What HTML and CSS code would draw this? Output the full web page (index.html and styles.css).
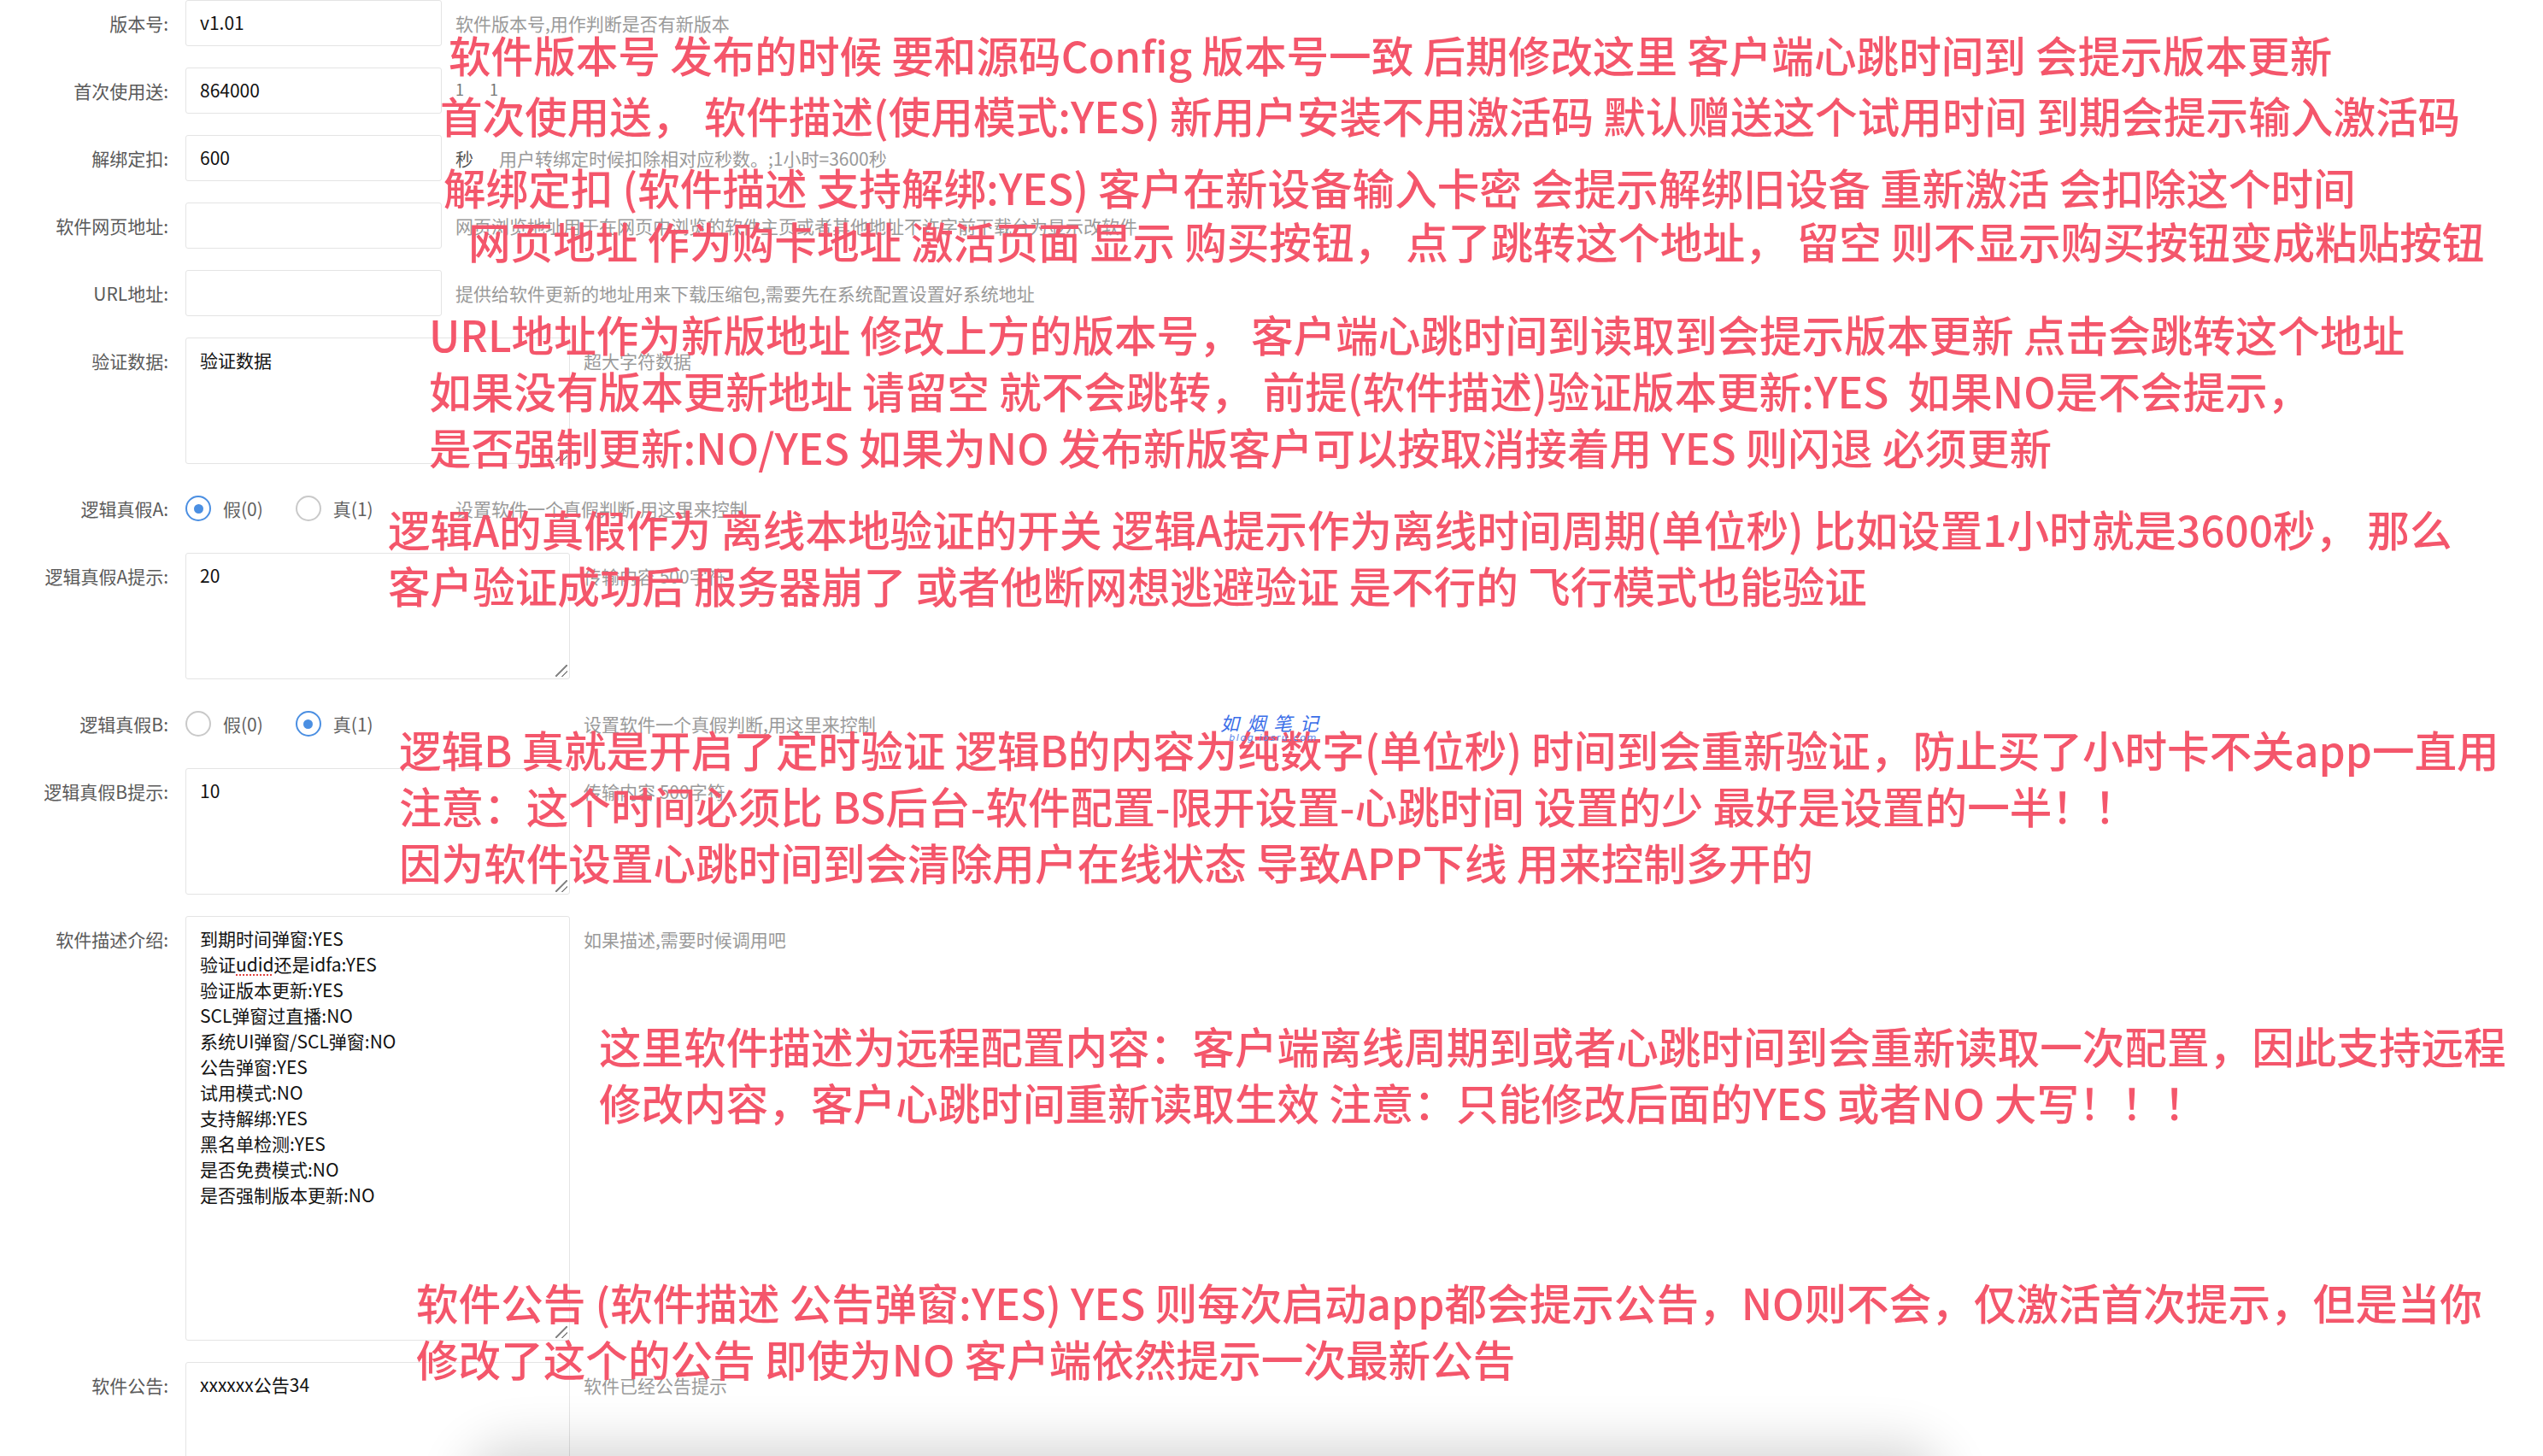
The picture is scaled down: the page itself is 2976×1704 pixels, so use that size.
FILE: index.html
```html
<!DOCTYPE html>
<html lang="zh-CN">
<head>
<meta charset="utf-8">
<title>软件配置</title>
<link rel="stylesheet" href="styles.css">
</head>
<body>
<div class="page">
  <form class="form">
    <div class="row">
      <label class="label">版本号:</label>
      <div class="input">v1.01</div>
      <div class="hint">软件版本号,用作判断是否有新版本</div>
    </div>
    <div class="row">
      <label class="label">首次使用送:</label>
      <div class="input">864000</div>
      <div class="hint hint-small"><span>1</span><span>1</span></div>
    </div>
    <div class="row">
      <label class="label">解绑定扣:</label>
      <div class="input">600</div>
      <div class="hint"><span class="unit">秒</span>用户转绑定时候扣除相对应秒数。;1小时=3600秒</div>
    </div>
    <div class="row">
      <label class="label">软件网页地址:</label>
      <div class="input"></div>
      <div class="hint">网页浏览地址用于在网页中浏览的软件主页或者其他地址不许字前下载台为显示改软件</div>
    </div>
    <div class="row">
      <label class="label">URL地址:</label>
      <div class="input"></div>
      <div class="hint">提供给软件更新的地址用来下载压缩包,需要先在系统配置设置好系统地址</div>
    </div>
    <div class="row">
      <label class="label">验证数据:</label>
      <div class="textarea">验证数据</div>
      <div class="hint">超大字符数据</div>
    </div>
    <div class="row">
      <label class="label">逻辑真假A:</label>
      <div class="radios">
        <span class="radio"><i class="dot on"></i>假(0)</span>
        <span class="radio"><i class="dot"></i>真(1)</span>
      </div>
      <div class="hint">设置软件一个真假判断,用这里来控制</div>
    </div>
    <div class="row">
      <label class="label">逻辑真假A提示:</label>
      <div class="textarea">20</div>
      <div class="hint">传输内容 500字符</div>
    </div>
    <div class="row">
      <label class="label">逻辑真假B:</label>
      <div class="radios radios-wide">
        <span class="radio"><i class="dot"></i>假(0)</span>
        <span class="radio"><i class="dot on"></i>真(1)</span>
      </div>
      <div class="hint">设置软件一个真假判断,用这里来控制</div>
    </div>
    <div class="row">
      <label class="label">逻辑真假B提示:</label>
      <div class="textarea">10</div>
      <div class="hint">传输内容 500字符</div>
    </div>
    <div class="row">
      <label class="label">软件描述介绍:</label>
      <div class="textarea textarea-tall">
        <div>到期时间弹窗:YES</div>
        <div>验证<span class="spell">udid</span>还是idfa:YES</div>
        <div>验证版本更新:YES</div>
        <div>SCL弹窗过直播:NO</div>
        <div>系统UI弹窗/SCL弹窗:NO</div>
        <div>公告弹窗:YES</div>
        <div>试用模式:NO</div>
        <div>支持解绑:YES</div>
        <div>黑名单检测:YES</div>
        <div>是否免费模式:NO</div>
        <div>是否强制版本更新:NO</div>
      </div>
      <div class="hint">如果描述,需要时候调用吧</div>
    </div>
    <div class="row">
      <label class="label">软件公告:</label>
      <div class="textarea">xxxxxx公告34</div>
      <div class="hint">软件已经公告提示</div>
    </div>
  </form>

  <div class="note note-a">
    <div>软件版本号 发布的时候 要和源码Config 版本号一致 后期修改这里 客户端心跳时间到 会提示版本更新</div>
  </div>
  <div class="note note-b">
    <div>首次使用送， 软件描述(使用模式:YES) 新用户安装不用激活码 默认赠送这个试用时间 到期会提示输入激活码</div>
  </div>
  <div class="note note-c">
    <div>解绑定扣 (软件描述 支持解绑:YES) 客户在新设备输入卡密 会提示解绑旧设备 重新激活 会扣除这个时间</div>
  </div>
  <div class="note note-d">
    <div>网页地址 作为购卡地址 激活页面 显示 购买按钮， 点了跳转这个地址， 留空 则不显示购买按钮变成粘贴按钮</div>
  </div>
  <div class="note note-e">
    <div>URL地址作为新版地址 修改上方的版本号， 客户端心跳时间到读取到会提示版本更新 点击会跳转这个地址</div>
    <div>如果没有版本更新地址 请留空 就不会跳转， 前提(软件描述)验证版本更新:YES  如果NO是不会提示，</div>
    <div>是否强制更新:NO/YES 如果为NO 发布新版客户可以按取消接着用 YES 则闪退 必须更新</div>
  </div>
  <div class="note note-f">
    <div>逻辑A的真假作为 离线本地验证的开关 逻辑A提示作为离线时间周期(单位秒) 比如设置1小时就是3600秒， 那么</div>
    <div>客户验证成功后 服务器崩了 或者他断网想逃避验证 是不行的 飞行模式也能验证</div>
  </div>
  <div class="note note-g">
    <div>逻辑B 真就是开启了定时验证 逻辑B的内容为纯数字(单位秒) 时间到会重新验证，防止买了小时卡不关app一直用</div>
    <div>注意：这个时间必须比 BS后台-软件配置-限开设置-心跳时间 设置的少 最好是设置的一半！！</div>
    <div>因为软件设置心跳时间到会清除用户在线状态 导致APP下线 用来控制多开的</div>
  </div>
  <div class="note note-h">
    <div>这里软件描述为远程配置内容：客户端离线周期到或者心跳时间到会重新读取一次配置，因此支持远程</div>
    <div>修改内容，客户心跳时间重新读取生效 注意：只能修改后面的YES 或者NO 大写！！！</div>
  </div>
  <div class="note note-i">
    <div>软件公告 (软件描述 公告弹窗:YES) YES 则每次启动app都会提示公告，NO则不会，仅激活首次提示，但是当你</div>
    <div>修改了这个的公告 即使为NO 客户端依然提示一次最新公告</div>
  </div>

  <div class="watermark">
    <div class="wm-title">如烟笔记</div>
    <div class="wm-url">blog.iosru.com</div>
  </div>

  <div class="shadow"></div>
</div>
</body>
</html>
```

FILE: styles.css
```css
html, body {
  margin: 0;
  padding: 0;
  overflow: hidden;
  background: #ffffff;
}

.page {
  position: relative;
  width: 2976px;
  height: 1704px;
  overflow: hidden;
  font-family: "Noto Sans CJK SC", "Noto Sans", sans-serif;
}

.form {
  display: flex;
  flex-direction: column;
  gap: 25px;
  margin: 0;
}

.row {
  display: flex;
  align-items: flex-start;
}

.label {
  width: 217px;
  box-sizing: border-box;
  padding-right: 20px;
  height: 54px;
  line-height: 54px;
  text-align: right;
  font-size: 21px;
  color: #5a5a5a;
  flex: none;
}

.input {
  width: 300px;
  height: 54px;
  box-sizing: border-box;
  border: 1.5px solid #e4e4e4;
  border-radius: 3px;
  padding-left: 16px;
  line-height: 51px;
  font-size: 21px;
  color: #111111;
  flex: none;
}

.hint {
  margin-left: 16px;
  height: 54px;
  line-height: 54px;
  font-size: 21px;
  color: #9a9a9a;
  white-space: nowrap;
}

.hint-small {
  display: flex;
  gap: 30px;
  font-size: 18px;
  line-height: 50px;
  color: #777;
}

.unit {
  color: #555;
  margin-right: 30px;
}

.textarea {
  position: relative;
  width: 450px;
  height: 148px;
  box-sizing: border-box;
  border: 1.5px solid #e4e4e4;
  border-radius: 3px;
  padding: 10px 16px;
  line-height: 30px;
  font-size: 21px;
  color: #111111;
  flex: none;
}

.textarea::after {
  content: "";
  position: absolute;
  right: 2px;
  bottom: 2px;
  width: 14px;
  height: 14px;
  background: linear-gradient(135deg,
    transparent 0 46%, #8a8a8a 46% 54%, transparent 54% 72%,
    #8a8a8a 72% 80%, transparent 80% 100%);
}

.textarea-tall {
  height: 497px;
}

.spell {
  text-decoration: underline dotted #e0433f;
  text-decoration-thickness: 2px;
  text-underline-offset: 3px;
}

.radios {
  width: 300px;
  height: 54px;
  display: flex;
  align-items: center;
  flex: none;
}

.radios-wide {
  width: 450px;
}

.radio {
  display: flex;
  align-items: center;
  gap: 14px;
  margin-right: 38px;
  font-size: 21px;
  color: #5f5f5f;
}

.dot {
  width: 30px;
  height: 30px;
  box-sizing: border-box;
  border: 2px solid #c9c9c9;
  border-radius: 50%;
  display: flex;
  align-items: center;
  justify-content: center;
}

.dot.on {
  border-color: #4b8fe2;
}

.dot.on::after {
  content: "";
  width: 11px;
  height: 11px;
  border-radius: 50%;
  background: #4b8fe2;
}

.note {
  position: absolute;
  color: #f4566b;
  font-size: 49.6px;
  font-weight: 500;
  line-height: 66px;
  white-space: nowrap;
  font-family: "Noto Sans CJK SC", sans-serif;
}

.note > div {
  white-space: pre;
}

.note-a { left: 525px; top: 30px; }
.note-b { left: 515px; top: 101px; }
.note-c { left: 519px; top: 185px; }
.note-d { left: 548px; top: 248px; }
.note-e { left: 502px; top: 357px; }
.note-f { left: 454px; top: 585px; }
.note-g { left: 467px; top: 843px; }
.note-h { left: 701px; top: 1190px; }
.note-i { left: 487px; top: 1490px; }

.watermark {
  position: absolute;
  left: 1428px;
  top: 832px;
  color: #3b6ee8;
  font-style: italic;
  text-align: center;
}

.wm-title {
  font-size: 22px;
  line-height: 26px;
  letter-spacing: 9px;
}

.wm-url {
  font-family: "DejaVu Sans", sans-serif;
  font-size: 11px;
  line-height: 12px;
  letter-spacing: 1.6px;
  color: #5a86ea;
}

.shadow {
  position: absolute;
  left: 560px;
  top: 1712px;
  width: 1700px;
  height: 80px;
  border-radius: 40px;
  box-shadow: 0 -6px 60px 16px rgba(0, 0, 0, 0.16);
  background: #e2e2e2;
}
```
